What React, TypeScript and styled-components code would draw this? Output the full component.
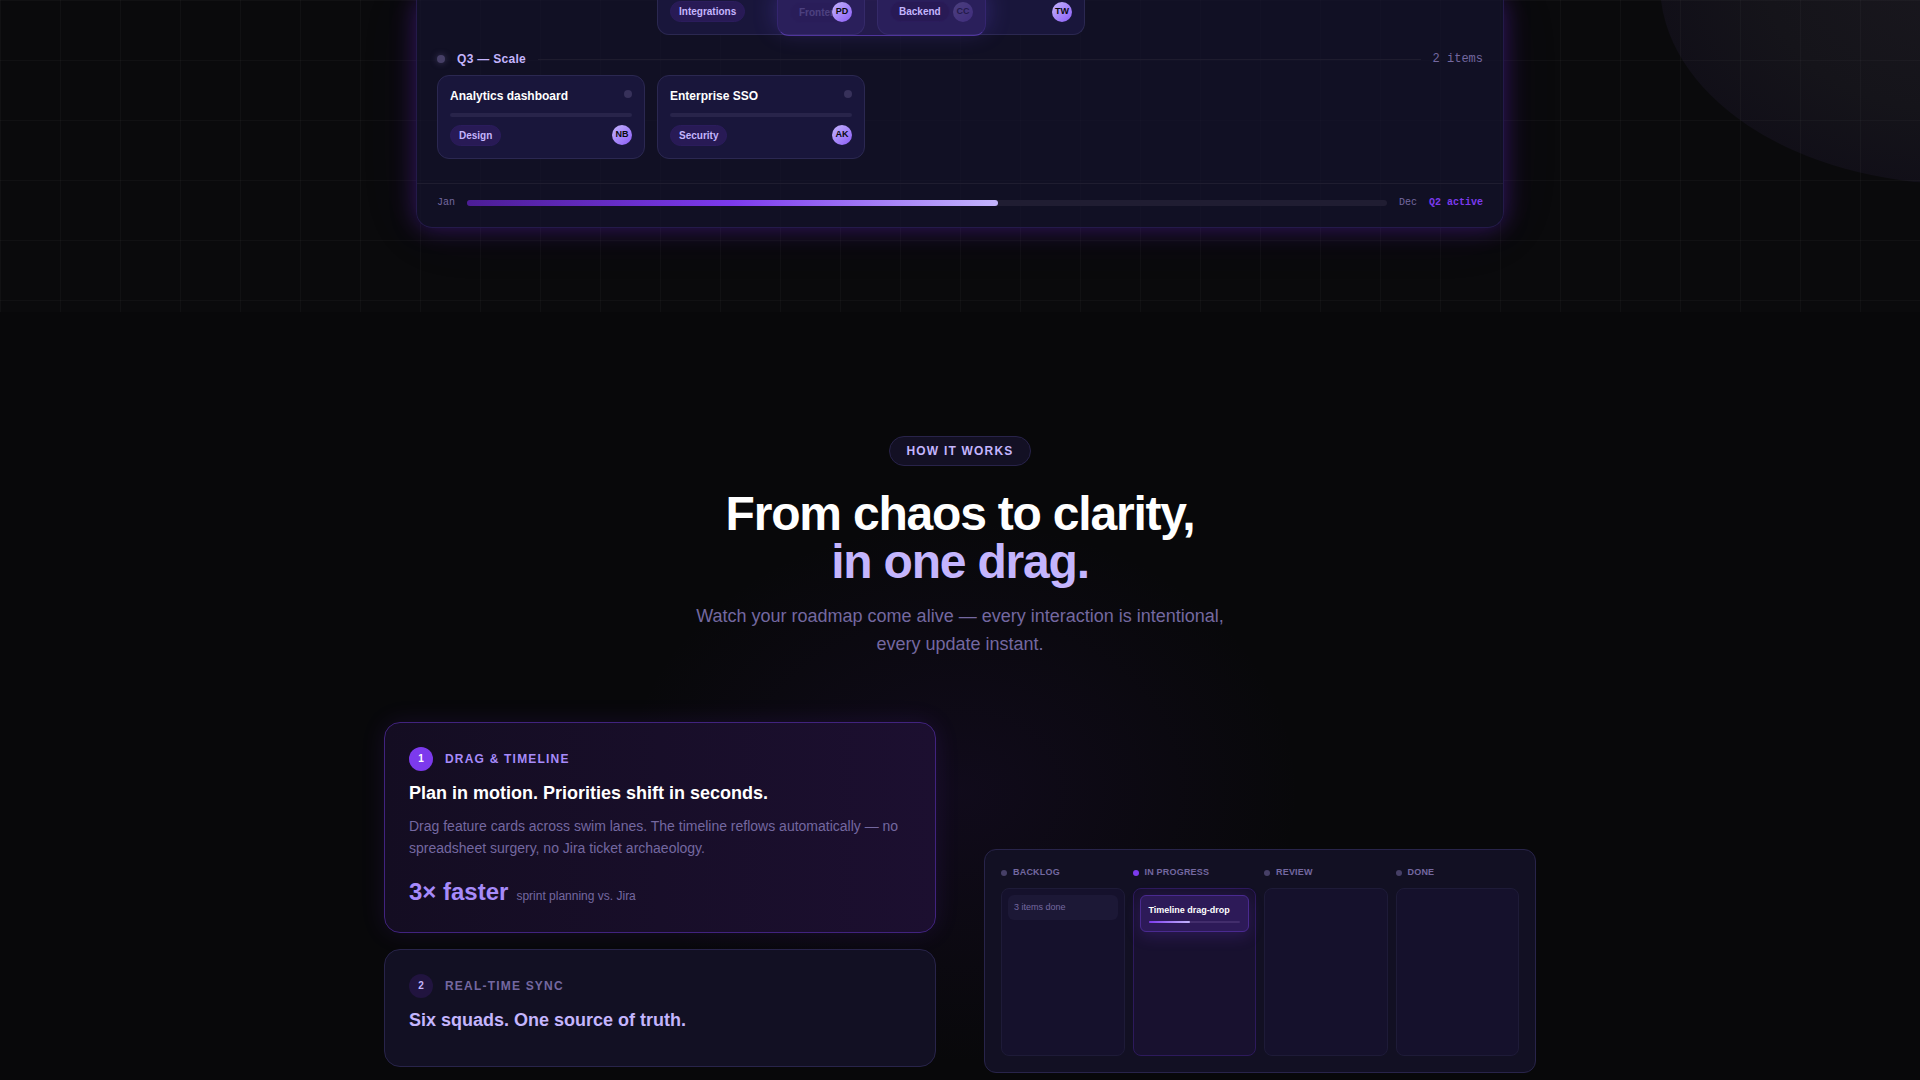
import React from "react";
import styled, { createGlobalStyle, css } from "styled-components";

const sans = `"Liberation Sans", Arial, sans-serif`;
const mono = `"Liberation Mono", "Courier New", monospace`;

const GlobalStyle = createGlobalStyle`
  *, *::before, *::after { box-sizing: border-box; }
  body { margin: 0; background: #08080a; color: #fff; font-family: ${sans}; }
  h1, h2, h3, p, ul { margin: 0; padding: 0; }
  ul { list-style: none; }
`;

const Page = styled.div`
  min-height: 100vh;
  overflow: hidden;
`;

/* ---------- hero ---------- */

const Hero = styled.section`
  position: relative;
  overflow: hidden;
  padding: 0 32px 84px;
  background: #0a0a0c;

  &::before {
    content: "";
    position: absolute;
    z-index: 1;
    inset: 0;
    pointer-events: none;
    background-image: linear-gradient(rgba(255, 255, 255, 0.028) 1px, transparent 1px),
      linear-gradient(90deg, rgba(255, 255, 255, 0.028) 1px, transparent 1px);
    background-size: 60px 60px;
  }
`;

const Blob = styled.div`
  position: absolute;
  top: -216px;
  right: -340px;
  width: 600px;
  height: 400px;
  border-radius: 50%;
  background: radial-gradient(ellipse, #19171e 0%, #15141a 45%, #110f18 72%);
`;

const Board = styled.div`
  position: relative;
  z-index: 2;
  max-width: 1088px;
  margin: 0 auto;
  border: 1px solid #241a4a;
  border-top: 0;
  border-radius: 0 0 16px 16px;
  background: rgba(22, 20, 49, 0.65);
  box-shadow: 0 0 24px rgba(109, 40, 217, 0.4), 0 0 64px rgba(76, 29, 149, 0.08);
`;

const Lanes = styled.div`
  position: relative;
  padding: 0 20px 24px;
`;

const Lane = styled.ul`
  display: grid;
  grid-template-columns: repeat(auto-fill, 208px);
  gap: 12px;
`;

const LaneHeader = styled.header`
  display: flex;
  align-items: center;
  gap: 12px;
  height: 16px;
  margin: 16px 0 8px;
`;

const Dot = styled.span<{ $size: number; $glow?: boolean; $color?: string }>`
  flex: none;
  width: ${(p) => p.$size}px;
  height: ${(p) => p.$size}px;
  border-radius: 50%;
  background: ${(p) => p.$color ?? "#463f66"};
  ${(p) => p.$glow && css`box-shadow: 0 0 6px rgba(90, 80, 130, 0.6);`}
`;

const LaneTitle = styled.h2`
  font-size: 12px;
  line-height: 16px;
  font-weight: 700;
  letter-spacing: 0.3px;
  color: #c4b5fd;
`;

const Rule = styled.span`
  flex: 1;
  height: 1px;
  background: #1e1c2e;
`;

const Count = styled.span`
  font: 12px/16px ${mono};
  color: #7468a0;
`;

const Feature = styled.li<{ $cut?: boolean; $first?: number }>`
  ${(p) => p.$first && css`grid-column-start: ${p.$first};`}
  padding: 12px;
  border: 1px solid #2b2851;
  border-radius: 12px;
  background: #19163b;
  ${(p) => p.$cut && css`
    padding-top: 1px;
    border-top: 0;
    border-radius: 0 0 12px 12px;
  `}
`;

const FeatureHead = styled.div`
  display: flex;
  justify-content: space-between;
  padding-bottom: 8px;
  > span { margin-top: 2px; }
`;

const FeatureTitle = styled.h3`
  font-size: 12px;
  line-height: 17px;
  font-weight: 700;
`;

const FeatureTrack = styled.div`
  height: 4px;
  margin-bottom: 8px;
  border-radius: 2px;
  background: #28244a;
`;

const FeatureFoot = styled.div<{ $align?: string }>`
  position: relative;
  z-index: 2;
  display: flex;
  align-items: ${(p) => p.$align ?? "flex-start"};
  justify-content: space-between;
`;

const Tag = styled.span`
  padding: 2px 8px;
  border: 1px solid #2b1c5c;
  border-radius: 11px;
  background: #281a55;
  font-size: 10px;
  line-height: 15px;
  font-weight: 700;
  color: #c4b5fd;
`;

const Avatar = styled.span`
  width: 20px;
  height: 20px;
  border-radius: 50%;
  background: linear-gradient(135deg, #c4b5fd, #8b5cf6);
  font-size: 9px;
  line-height: 19px;
  font-weight: 700;
  text-align: center;
  color: #0a0a0c;
`;

/* The card being dragged floats between two cells of the lane. */
const Dragged = styled.div`
  position: absolute;
  z-index: 1;
  top: 0;
  left: 360px;
  display: flex;
  align-items: flex-start;
  justify-content: space-between;
  width: 209px;
  height: 36px;
  padding: 2px 12px 12px;
  border: 1px solid rgba(124, 80, 237, 0.14);
  border-top: 0;
  border-bottom-color: rgba(124, 80, 237, 0.5);
  border-radius: 0 0 12px 12px;
  background: rgba(72, 48, 150, 0.36);
  box-shadow: 0 -6px 24px rgba(109, 80, 237, 0.32);
  > * { opacity: 0.22; }
`;

const Timeline = styled.footer`
  display: flex;
  align-items: center;
  gap: 12px;
  padding: 12px 20px 17px;
  border-top: 1px solid #1f1d30;
  font: 10px/14px ${mono};
  color: #7468a0;

  strong { color: #7c3aed; }
`;

const TimelineTrack = styled.div`
  flex: 1;
  height: 6px;
  border-radius: 3px;
  background: #201d32;
`;

const TimelineFill = styled.div`
  height: 100%;
  border-radius: 3px;
  background: linear-gradient(90deg, #4c1d95, #7c3aed 50%, #c4b5fd);
`;

/* ---------- how it works ---------- */

const How = styled.section`
  padding: 124px 32px 0;
  background: radial-gradient(ellipse 400px 320px at 50% 480px, rgba(76, 29, 149, 0.12), transparent 85%);
`;

const Intro = styled.header`
  display: flex;
  flex-direction: column;
  align-items: center;
  text-align: center;
`;

const Pill = styled.span`
  padding: 5px 16px;
  border: 1px solid #28234a;
  border-radius: 15px;
  background: #131024;
  font-size: 12px;
  line-height: 18px;
  font-weight: 700;
  letter-spacing: 1.2px;
  color: #c4b5fd;
`;

const Headline = styled.h1`
  margin: 24px 0 16px;
  font-size: 48px;
  line-height: 48px;
  font-weight: 700;
  letter-spacing: -1.2px;

  span { display: block; color: #c4b5fd; }
`;

const Lead = styled.p`
  max-width: 560px;
  font-size: 18px;
  line-height: 28px;
  color: #7468a0;
`;

const Columns = styled.div`
  display: grid;
  grid-template-columns: 1fr 1fr;
  gap: 48px;
  align-items: start;
  max-width: 1152px;
  margin: 64px auto 0;
`;

const Steps = styled.div`
  display: grid;
  gap: 16px;
`;

const Step = styled.article<{ $active?: boolean }>`
  padding: 24px;
  border: 1px solid #28244a;
  border-radius: 16px;
  background: #121023;
  ${(p) => p.$active && css`
    border-color: #41237f;
    background: linear-gradient(90deg, #140d22, #1c0f30);
    box-shadow: 0 0 24px rgba(124, 58, 237, 0.12);
  `}
`;

const StepHead = styled.div<{ $active?: boolean }>`
  display: flex;
  align-items: center;
  gap: 12px;
  font-size: 12px;
  line-height: 16px;
  font-weight: 700;
  letter-spacing: 1.2px;
  color: ${(p) => (p.$active ? "#a78bfa" : "#7468a0")};
`;

const StepNumber = styled.span<{ $active?: boolean }>`
  display: grid;
  place-items: center;
  width: 24px;
  height: 24px;
  border-radius: 50%;
  background: ${(p) => (p.$active ? "#7c3aed" : "#21143f")};
  font-size: 10px;
  letter-spacing: 0;
  color: ${(p) => (p.$active ? "#fff" : "#c4b5fd")};
`;

const StepTitle = styled.h2<{ $active?: boolean }>`
  margin: 8px 0;
  font-size: 18px;
  line-height: 28px;
  font-weight: 700;
  color: ${(p) => (p.$active ? "#fff" : "#c4b5fd")};
`;

const StepText = styled.p`
  font-size: 14px;
  line-height: 22px;
  color: #7468a0;
`;

const Stat = styled.p`
  display: flex;
  align-items: baseline;
  gap: 8px;
  margin-top: 17px;
  font-size: 12px;
  line-height: 16px;
  color: #7468a0;

  strong { font-size: 24px; line-height: 32px; color: #a78bfa; }
`;

const Kanban = styled.div`
  display: grid;
  grid-template-columns: repeat(4, 1fr);
  gap: 8px;
  margin-top: 127px;
  padding: 16px;
  border: 1px solid #28244a;
  border-radius: 12px;
  background: #121023;
`;

const KanbanHead = styled.h3`
  display: flex;
  align-items: center;
  gap: 6px;
  margin: 0 0 9px;
  font-size: 9px;
  line-height: 13px;
  font-weight: 700;
  letter-spacing: 0.2px;
  color: #7468a0;
`;

const KanbanBody = styled.div<{ $active?: boolean }>`
  height: 168px;
  padding: 6px;
  border: 1px solid ${(p) => (p.$active ? "#2d1a5c" : "#1e1b38")};
  border-radius: 8px;
  background: ${(p) => (p.$active ? "#18112f" : "#15112c")};
`;

const DoneNote = styled.p`
  padding: 6px;
  border-radius: 6px;
  background: #1c1836;
  font-size: 9px;
  line-height: 13px;
  color: #7468a0;
`;

const Task = styled.div`
  padding: 8px;
  border: 1px solid #4a2a90;
  border-radius: 6px;
  background: #2d1a58;
  box-shadow: 0 4px 16px rgba(124, 58, 237, 0.2);
  font-size: 9px;
  line-height: 13px;
  font-weight: 700;
`;

const TaskTrack = styled.div`
  height: 2px;
  margin-top: 4px;
  border-radius: 1px;
  background: #422d6c;
`;

const TaskFill = styled.div`
  height: 100%;
  border-radius: 1px;
  background: linear-gradient(90deg, #7c3aed, #c4b5fd);
`;

const cutFeatures = [
  { tag: "Integrations", owner: "PD", column: 2 },
  { tag: "Backend", owner: "TW", column: 3 },
];

const scaleFeatures = [
  { title: "Analytics dashboard", tag: "Design", owner: "NB" },
  { title: "Enterprise SSO", tag: "Security", owner: "AK" },
];

const kanban = ["BACKLOG", "IN PROGRESS", "REVIEW", "DONE"];

export default function App() {
  return (
    <Page>
      <GlobalStyle />
      <Hero>
        <Blob />
        <Board>
          <Lanes>
            <Lane>
              {cutFeatures.map((f) => (
                <Feature key={f.tag} $cut $first={f.column}>
                  <FeatureFoot $align="flex-end">
                    <Tag>{f.tag}</Tag>
                    <Avatar>{f.owner}</Avatar>
                  </FeatureFoot>
                </Feature>
              ))}
            </Lane>
            <Dragged>
              <Tag>Frontend</Tag>
              <Avatar>CC</Avatar>
            </Dragged>
            <LaneHeader>
              <Dot $size={8} $glow />
              <LaneTitle>Q3 — Scale</LaneTitle>
              <Rule />
              <Count>2 items</Count>
            </LaneHeader>
            <Lane>
              {scaleFeatures.map((f) => (
                <Feature key={f.title}>
                  <FeatureHead>
                    <FeatureTitle>{f.title}</FeatureTitle>
                    <Dot $size={8} $color="#37315a" />
                  </FeatureHead>
                  <FeatureTrack />
                  <FeatureFoot>
                    <Tag>{f.tag}</Tag>
                    <Avatar>{f.owner}</Avatar>
                  </FeatureFoot>
                </Feature>
              ))}
            </Lane>
          </Lanes>
          <Timeline>
            <span>Jan</span>
            <TimelineTrack>
              <TimelineFill style={{ width: "57.7%" }} />
            </TimelineTrack>
            <span>Dec</span>
            <strong>Q2 active</strong>
          </Timeline>
        </Board>
      </Hero>

      <How>
        <Intro>
          <Pill>HOW IT WORKS</Pill>
          <Headline>
            From chaos to clarity,
            <span>in one drag.</span>
          </Headline>
          <Lead>Watch your roadmap come alive — every interaction is intentional, every update instant.</Lead>
        </Intro>
        <Columns>
          <Steps>
            <Step $active>
              <StepHead $active>
                <StepNumber $active>1</StepNumber>
                DRAG &amp; TIMELINE
              </StepHead>
              <StepTitle $active>Plan in motion. Priorities shift in seconds.</StepTitle>
              <StepText>
                Drag feature cards across swim lanes. The timeline reflows automatically — no spreadsheet surgery, no
                Jira ticket archaeology.
              </StepText>
              <Stat>
                <strong>3× faster</strong> sprint planning vs. Jira
              </Stat>
            </Step>
            <Step>
              <StepHead>
                <StepNumber>2</StepNumber>
                REAL-TIME SYNC
              </StepHead>
              <StepTitle>Six squads. One source of truth.</StepTitle>
            </Step>
          </Steps>
          <Kanban>
            {kanban.map((name, i) => (
              <section key={name}>
                <KanbanHead>
                  <Dot $size={6} $color={i === 1 ? "#7c3aed" : undefined} />
                  {name}
                </KanbanHead>
                <KanbanBody $active={i === 1}>
                  {i === 0 && <DoneNote>3 items done</DoneNote>}
                  {i === 1 && (
                    <Task>
                      Timeline drag-drop
                      <TaskTrack>
                        <TaskFill style={{ width: "45%" }} />
                      </TaskTrack>
                    </Task>
                  )}
                </KanbanBody>
              </section>
            ))}
          </Kanban>
        </Columns>
      </How>
    </Page>
  );
}
